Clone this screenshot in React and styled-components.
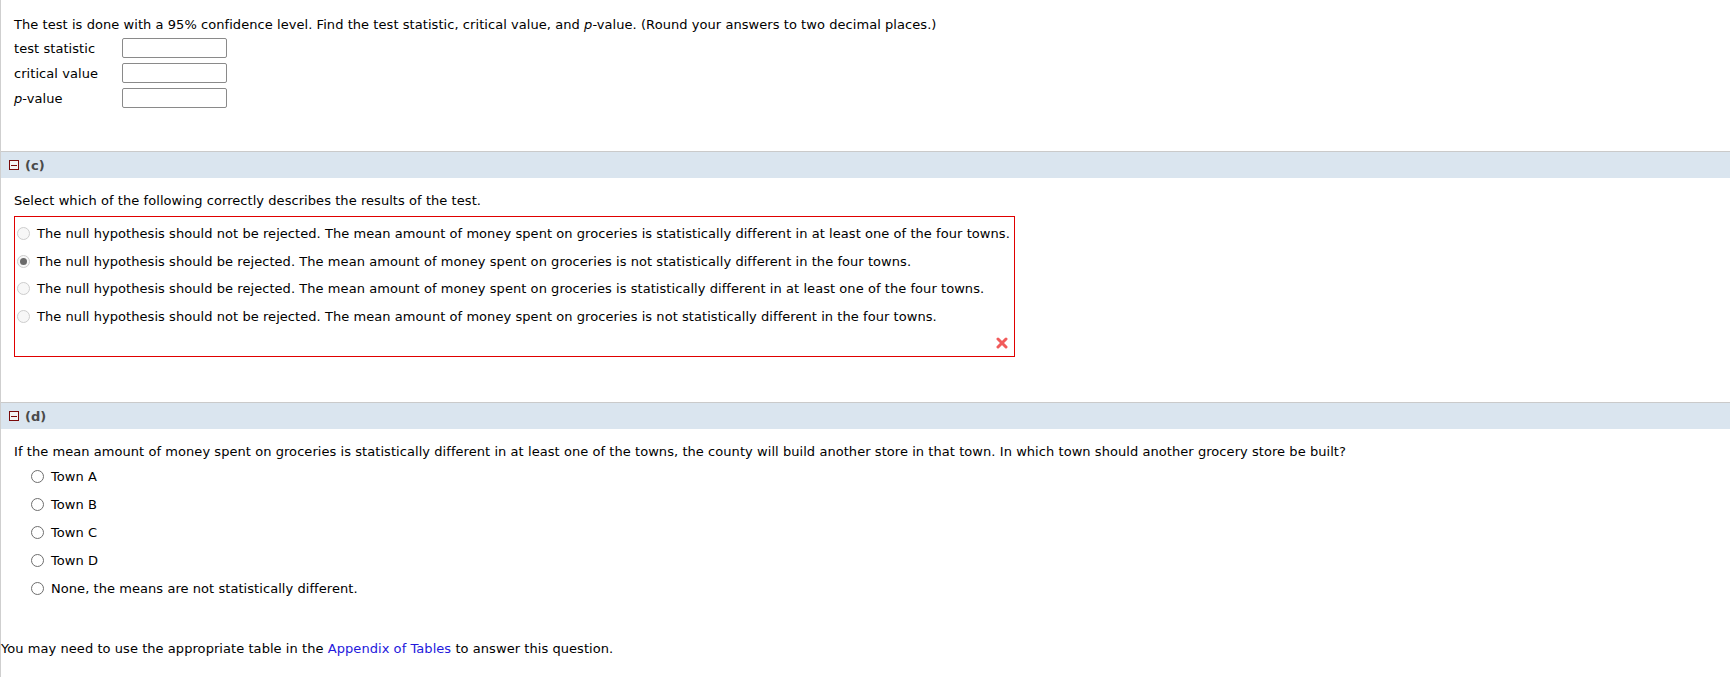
import React from 'react'
import { styled, createGlobalStyle } from 'styled-components'

const GlobalStyle = createGlobalStyle`
  body {
    margin: 0;
    background: #fff;
    font-family: "DejaVu Sans", Verdana, sans-serif;
    font-size: 13px;
    letter-spacing: 0.06px;
    color: #000;
  }
`

const Page = styled.div`
  border-left: 1px solid #cfcfcf;
  min-height: 677px;
  box-sizing: border-box;
  padding-top: 15px;
`

const Body = styled.div`
  padding-left: 13px;
`

const Line = styled.div`
  line-height: 20px;
  white-space: nowrap;
`

const AnswerGrid = styled.div`
  display: grid;
  grid-template-columns: 108px 105px;
  grid-auto-rows: 24px;
  row-gap: 1px;
  margin-top: 1px;
  align-items: center;
`

const AnswerBox = styled.div`
  height: 20px;
  box-sizing: border-box;
  border: 1px solid #8a8a8a;
  border-radius: 2px;
  background: #fff;
`

const SectionBar = styled.div`
  margin-top: ${(p) => p.$gap}px;
  border-top: 1px solid #cacaca;
  background: #dae5ef;
  height: 26px;
  display: flex;
  align-items: center;
  padding-left: 8px;
  gap: 6px;
  font-weight: bold;
  color: #4a4a4a;
`

const Toggle = styled.span`
  width: 10px;
  height: 10px;
  box-sizing: border-box;
  border: 1px solid #7a0a0a;
  background: #f4f4f4;
  display: flex;
  align-items: center;
  justify-content: center;
  &::after {
    content: '';
    width: 6px;
    height: 1px;
    background: #7a0a0a;
  }
`

const Prompt = styled(Line)`
  margin-top: ${(p) => p.$top}px;
`

const WrongBox = styled.div`
  margin-top: 5px;
  width: 1001px;
  box-sizing: border-box;
  border: 1px solid #e00000;
  padding: 3px 0 0 2px;
`

const Option = styled.label`
  display: flex;
  align-items: center;
  height: ${(p) => p.$h}px;
  gap: ${(p) => p.$gap}px;
  white-space: nowrap;
`

const Radio = styled.span`
  width: 13px;
  height: 13px;
  box-sizing: border-box;
  border-radius: 50%;
  border: 1px solid ${(p) => (p.$muted ? '#cdcdcd' : '#6e6e6e')};
  background: ${(p) => (p.$muted ? '#f7f7f7' : '#fff')};
  display: flex;
  align-items: center;
  justify-content: center;
  flex-shrink: 0;
  &::after {
    content: '';
    display: ${(p) => (p.$checked ? 'block' : 'none')};
    width: 7px;
    height: 7px;
    border-radius: 50%;
    background: #6a6a6a;
  }
`

const MarkRow = styled.div`
  height: 26px;
  display: flex;
  justify-content: flex-end;
  align-items: flex-start;
  padding: 7px 6px 0 0;
  box-sizing: border-box;
`

const TownList = styled.div`
  padding-left: 17px;
`

const Footer = styled(Line)`
  margin-top: 37px;
`

const Link = styled.a`
  color: #2318dc;
  text-decoration: none;
`

const WrongMark = () => (
  <svg width="12" height="12" viewBox="0 0 12 12">
    <g stroke="#f15b5b" strokeWidth="3" strokeLinecap="round">
      <line x1="2" y1="2" x2="10" y2="10" />
      <line x1="10" y1="2" x2="2" y2="10" />
    </g>
  </svg>
)

const choicesC = [
  'The null hypothesis should not be rejected. The mean amount of money spent on groceries is statistically different in at least one of the four towns.',
  'The null hypothesis should be rejected. The mean amount of money spent on groceries is not statistically different in the four towns.',
  'The null hypothesis should be rejected. The mean amount of money spent on groceries is statistically different in at least one of the four towns.',
  'The null hypothesis should not be rejected. The mean amount of money spent on groceries is not statistically different in the four towns.',
]

const towns = ['Town A', 'Town B', 'Town C', 'Town D', 'None, the means are not statistically different.']

const App = () => {
  return (
    <Page>
      <GlobalStyle />
      <Body>
        <Line>
          The test is done with a 95% confidence level. Find the test statistic, critical value, and <i>p</i>-value. (Round your answers to two decimal places.)
        </Line>
        <AnswerGrid>
          <span>test statistic</span>
          <AnswerBox />
          <span>critical value</span>
          <AnswerBox />
          <span><i>p</i>-value</span>
          <AnswerBox />
        </AnswerGrid>
      </Body>

      <SectionBar $gap={41}>
        <Toggle />
        <span>(c)</span>
      </SectionBar>
      <Body>
        <Prompt $top={13}>Select which of the following correctly describes the results of the test.</Prompt>
        <WrongBox>
          {choicesC.map((c, i) => (
            <Option key={i} $h={27.5} $gap={7}>
              <Radio $muted $checked={i === 1} />
              <span>{c}</span>
            </Option>
          ))}
          <MarkRow>
            <WrongMark />
          </MarkRow>
        </WrongBox>
      </Body>

      <SectionBar $gap={45}>
        <Toggle />
        <span>(d)</span>
      </SectionBar>
      <Body>
        <Prompt $top={13}>
          If the mean amount of money spent on groceries is statistically different in at least one of the towns, the county will build another store in that town. In which town should another grocery store be built?
        </Prompt>
        <TownList>
          {towns.map((t) => (
            <Option key={t} $h={28} $gap={7}>
              <Radio />
              <span>{t}</span>
            </Option>
          ))}
        </TownList>
      </Body>

      <Footer>
        You may need to use the appropriate table in the <Link href="#">Appendix of Tables</Link> to answer this question.
      </Footer>
    </Page>
  )
}

export default App
